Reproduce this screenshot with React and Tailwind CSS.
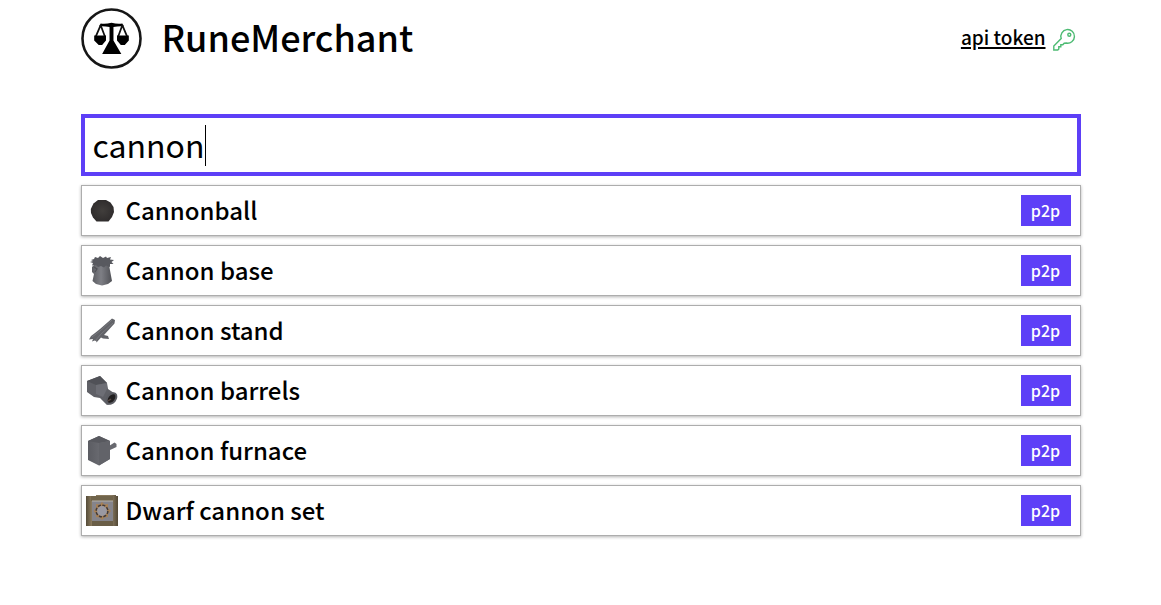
import React, { useState } from "react";

function ScalesLogo() {
  return (
    <svg viewBox="0 0 62 62" className="size-[61px] shrink-0" aria-hidden="true">
      <circle cx="31" cy="31" r="29.5" fill="none" stroke="#161616" strokeWidth="2.6" />
      <path d="M20 15.8 Q25 16.6 31 15 Q37 16.6 42 15.8 L43.5 18.6 Q38 18.2 33 19.4 V33 L41 46.8 H21.5 L29 33 V19.4 Q24 18.2 18.5 18.6 Z" fill="#000" />
      <path d="M20 17.5 L15 29 M20 17.5 L24.3 29 M42 17.5 L37.8 29 M42 17.5 L46.9 29" stroke="#111" strokeWidth="1.8" fill="none" />
      <path d="M13.4 28 H25.4 V33 L21.5 37.500 H18 L13.4 33 Z M36.6 28 H48.6 V33 L44.500 37.500 H40.500 L36.6 33 Z" fill="#000" />
    </svg>
  );
}

function KeyIcon() {
  return (
    <svg viewBox="0 0 24 24" className="size-6" fill="none" stroke="#4dbb73" strokeWidth="1.4" aria-hidden="true">
      <path d="M9.2 11.5 A6.800 6.800 0 1 1 14.2 16 L12.2 16.2 L10.8 17.800 H8.8 V19.800 H6.8 V22 L5.8 23 H1.8 V19 Z" />
      <circle cx="17.300" cy="7.800" r="1.5" />
    </svg>
  );
}

function Cannonball() {
  return (
    <>
      <defs>
        <radialGradient id="ball"><stop offset="0" stopColor="#413e3c" /><stop offset="1" stopColor="#302d2d" /></radialGradient>
      </defs>
      <path d="M12 5 H20 L24.500 7.500 L27.500 12 L28 17 L26 22 L22.500 26.500 H10.500 L7 22.500 L5 18 L4.800 14 L7.500 8.500 Z" fill="url(#ball)" />
    </>
  );
}

function CannonBase() {
  return (
    <>
      <defs>
        <linearGradient id="base"><stop offset="0" stopColor="#5b5c61" /><stop offset=".45" stopColor="#7e7f85" /><stop offset="1" stopColor="#505156" /></linearGradient>
      </defs>
      <path d="M8 10 H23 L26 26 L22 29 L16 30.5 L10 29 L6.500 26 L8 19 L6 17 V12 Z" fill="url(#base)" />
      <path d="M5 5 L8 4 L9 2 L12 3 L14 1 L17 3 L20 1.500 L21 3 L25 2 L24 4.500 L28 5 L25.500 7 L27.500 9 L24 9 L24 12 L20 10.500 L18 12.500 L15 11 L12 12 L10 10 L6 10.500 L7 8 L4 7 L7 6 Z" fill="#58595f" />
      <path d="M8 12 L11 14 L9 17" stroke="#505156" strokeWidth="1.200" fill="none" />
    </>
  );
}

function CannonStand() {
  return (
    <>
      <path d="M26 3.500 L29 5 L28.500 8.500 L18 20 L22 21 L23 24 L17 23.500 L15 22.500 L10.500 27.500 L10 25 L6 26.500 L7 24 L3 24.500 L5 21 L9 18 L14 14 Z" fill="#626368" />
      <path d="M26 5 L14 16 L6 22 M27 8 L15 19 L9 26" stroke="#77787d" strokeWidth="1" fill="none" />
    </>
  );
}

function CannonBarrels() {
  return (
    <>
      <path d="M1 6 L14 1 L21 8 L22 14 L31 20 L27 28 L21 30 L14 23 L8 22 L1 17 Z" fill="#5f6066" />
      <path d="M1 6 L14 1 L21 8 L10 10 Z" fill="#505157" />
      <path d="M10 10 L21 8 L21 14 L17 22 L10 19 Z" fill="#6d6e75" />
      <ellipse cx="25.500" cy="23.500" rx="4" ry="6" transform="rotate(39 25.500 23.500)" fill="#211f20" stroke="#5b5c62" strokeWidth="2" />
      <path d="M22 26 L25 24" stroke="#5a4942" strokeWidth="1.500" />
    </>
  );
}

function CannonFurnace() {
  return (
    <>
      <defs>
        <linearGradient id="furnace"><stop offset="0" stopColor="#5b5c62" /><stop offset="1" stopColor="#75767c" /></linearGradient>
      </defs>
      <path d="M23 11 L28.500 7.500 L30.500 9 V12 L24 15 Z" fill="#68696f" />
      <path d="M2 6 L13 1 L24 6 V24 L13 30.500 L2 25 Z" fill="url(#furnace)" />
      <path d="M2 6 L13 1 L24 6 L13 8 Z" fill="#58595f" />
      <path d="M13 8 L24 6 V24 L13 30.500 Z" fill="#626369" />
    </>
  );
}

function CannonSet() {
  return (
    <>
      <defs>
        <linearGradient id="crate"><stop offset="0" stopColor="#544b39" /><stop offset=".17" stopColor="#88785b" /><stop offset=".8" stopColor="#887960" /><stop offset="1" stopColor="#514734" /></linearGradient>
      </defs>
      <path d="M0 1 H10 V0 H30 V1 H32 V31 H0 Z" fill="url(#crate)" />
      <path d="M5 1 H27 V6 H5 Z" fill="#70644b" />
      <rect x="6" y="6" width="21" height="20" fill="#85848b" />
      <path d="M6 6 H27" stroke="#b6b1a9" />
      <path d="M16 7 L18.500 9.500 L22 9 L22 13 L25 16 L22 19 L22 22 L18.500 22.500 L16 25 L13.500 22.500 L10 22 L10 19 L7.500 16 L10 13 L10 9 L13.500 9.500 Z" fill="#a78155" />
      <circle cx="16" cy="16" r="5.800" fill="none" stroke="#3f3a3c" strokeWidth="1.600" strokeDasharray="3 1.500" />
      <circle cx="16" cy="16" r="4.900" fill="#9a99a2" />
      <path d="M6 26 H27 V31 H6 Z" fill="#6a5e47" />
    </>
  );
}

const items = [
  { name: "Cannonball", Art: Cannonball },
  { name: "Cannon base", Art: CannonBase },
  { name: "Cannon stand", Art: CannonStand },
  { name: "Cannon barrels", Art: CannonBarrels },
  { name: "Cannon furnace", Art: CannonFurnace },
  { name: "Dwarf cannon set", Art: CannonSet },
];

export default function App() {
  const [query, setQuery] = useState("cannon");
  return (
    <div className="min-h-screen bg-white px-4 pt-2 pb-8 font-['Noto_Sans_CJK_SC','Noto_Sans',sans-serif] text-black">
      <div className="mx-auto max-w-[1000px]">
        <header className="flex items-center justify-between">
          <a href="#home" className="flex items-center gap-5">
            <ScalesLogo />
            <h1 className="pb-1.5 text-4xl font-medium">RuneMerchant</h1>
          </a>
          <a href="#token" className="flex items-center gap-1.5 pr-[5px] text-[19px] leading-7 font-medium">
            <span className="pb-1 underline decoration-2 underline-offset-2">api token</span>
            <KeyIcon />
          </a>
        </header>
        <main className="mt-[45px] flex flex-col gap-[9px]">
          <div className="relative">
            <input
              type="text"
              aria-label="Search items"
              value={query}
              onChange={(e) => setQuery(e.target.value)}
              className="block h-[62px] w-full border-4 border-[#5d3ff7] bg-white px-2 pb-0.5 text-[32px] leading-[50px] outline-none"
            />
            {query === "cannon" && <span className="pointer-events-none absolute top-[11px] left-[124px] h-[41px] w-px bg-black" />}
          </div>
          <ul className="flex flex-col gap-[9px]">
            {items.map(({ name, Art }) => (
              <li key={name}>
                <a href="#item" className="flex h-[51px] items-center border border-[#adadad] pr-[9px] pl-1 shadow-[0_1px_3px_rgba(0,0,0,0.3)]">
                  <svg viewBox="0 0 32 32" className="size-8 shrink-0" aria-hidden="true"><Art /></svg>
                  <span className="ml-2 grow pb-0.5 text-2xl font-medium">{name}</span>
                  <span className="flex h-[31px] w-[50px] items-center justify-center bg-[#5d3ff7] pb-0.5 text-base font-medium text-white">p2p</span>
                </a>
              </li>
            ))}
          </ul>
        </main>
      </div>
    </div>
  );
}
